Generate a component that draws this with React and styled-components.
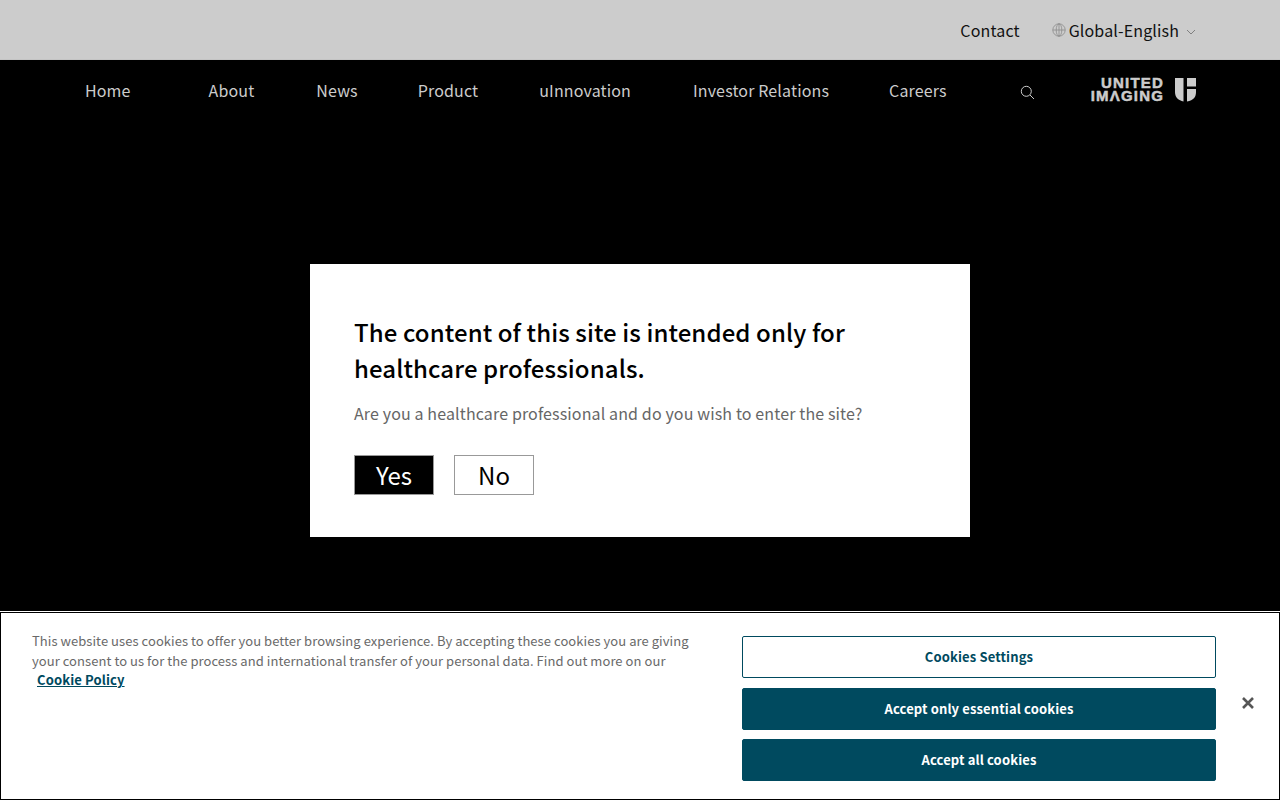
import React from "react";
import styled, { createGlobalStyle } from "styled-components";

const GlobalStyle = createGlobalStyle`
  html, body {
    margin: 0;
    padding: 0;
    background: #000;
  }
  body {
    font-family: "Noto Sans CJK SC", "Noto Sans", sans-serif;
  }
  * {
    box-sizing: border-box;
  }
`;

const Page = styled.div`
  width: 100%;
  height: 800px;
  background: #000;
  overflow: hidden;
`;

const TopBar = styled.div`
  height: 60px;
  background: #cccccc;
  border-bottom: 1px solid #c4c4c4;
  display: flex;
  align-items: center;
  justify-content: flex-end;
  padding: 0 84px 0 0;
  color: #111;
  font-size: 16px;
  letter-spacing: 0.14px;
`;

const Contact = styled.a`
  margin-right: 32px;
`;

const LangPicker = styled.div`
  display: flex;
  align-items: center;
`;

const LangLabel = styled.span`
  margin: 0 7px 0 3px;
`;

const Nav = styled.nav`
  height: 60px;
  display: flex;
  align-items: center;
  padding-left: 85px;
  color: #cccccc;
  font-size: 16px;
  letter-spacing: 0.14px;
`;

const NavItem = styled.a`
  margin-right: ${(p) => p.$gap || 61}px;
  white-space: nowrap;
`;

const SearchButton = styled.span`
  display: flex;
  margin: 4px 56px 0 0;
`;

const Logo = styled.div`
  display: flex;
  align-items: flex-start;
  gap: 12px;
  color: #cccccc;
  margin-top: -2px;
`;

const LogoText = styled.div`
  font-family: "Liberation Sans", sans-serif;
  font-weight: 700;
  font-size: 15px;
  line-height: 13px;
  text-align: right;
  -webkit-text-stroke: 0.5px #cccccc;
  letter-spacing: 1.2px;
  margin-right: -1px;
`;

const ShieldWrap = styled.span`
  display: flex;
  margin-top: 2px;
`;

const Overlay = styled.div`
  position: fixed;
  inset: 0;
  display: flex;
  align-items: center;
  justify-content: center;
`;

const Modal = styled.div`
  width: 660px;
  height: 273px;
  background: #fff;
  padding: 50px 44px 0;
`;

const Title = styled.h2`
  margin: 0;
  font-size: 24px;
  line-height: 36px;
  font-weight: 500;
  letter-spacing: 0.1px;
  color: #000;
`;

const Question = styled.p`
  margin: 14px 0 0;
  font-size: 16px;
  line-height: 26px;
  letter-spacing: 0.13px;
  color: #666;
`;

const ButtonRow = styled.div`
  display: flex;
  gap: 20px;
  margin-top: 29px;
`;

const ChoiceButton = styled.button`
  width: 80px;
  height: 40px;
  padding: 0;
  border: 1px solid #999;
  background: ${(p) => (p.$primary ? "#000" : "#fff")};
  color: ${(p) => (p.$primary ? "#fff" : "#000")};
  font-family: inherit;
  font-size: 24px;
  line-height: 36px;
`;

const CookieBanner = styled.div`
  position: fixed;
  left: 0;
  right: 0;
  bottom: 0;
  height: 188px;
  background: #fff;
  border: 1px solid #000;
  outline: 1px solid #fff;
  display: flex;
  padding: 18px 0 0 31px;
`;

const CookieText = styled.div`
  width: 680px;
  font-size: 13px;
  line-height: 19.5px;
  letter-spacing: 0.06px;
  color: #696969;
`;

const CookieLink = styled.a`
  display: block;
  margin-left: 5px;
  color: #004a5f;
  font-weight: 700;
  letter-spacing: 0.12px;
  text-decoration: underline;
`;

const CookieActions = styled.div`
  display: flex;
  flex-direction: column;
  gap: 9.5px;
  width: 474px;
  margin: 5px 0 0 30px;
`;

const CookieButton = styled.button`
  height: 42px;
  padding: 0 0 1px;
  border: 1px solid #004a5f;
  border-radius: 2px;
  background: ${(p) => (p.$filled ? "#004a5f" : "#fff")};
  color: ${(p) => (p.$filled ? "#fff" : "#004a5f")};
  font-family: inherit;
  font-size: 13px;
  font-weight: 700;
  letter-spacing: 0.13px;
`;

const CloseButton = styled.span`
  position: absolute;
  top: 84px;
  right: 25px;
  display: flex;
`;

const Chevron = styled.svg`
  margin-top: 4px;
`;

const GlobeIcon = () => (
  <svg width="14" height="14" viewBox="0 0 14 14" fill="none" stroke="#8a8a8a" strokeWidth="0.8">
    <circle cx="7" cy="7" r="6.2" />
    <ellipse cx="7" cy="7" rx="2.8" ry="6.2" />
    <path d="M.8 7h12.400M7 .8v12.400" />
  </svg>
);

const ChevronIcon = () => (
  <Chevron width="10" height="8" viewBox="0 0 10 8" fill="none" stroke="#777" strokeWidth="0.9">
    <path d="M1 2l4 4 4-4" />
  </Chevron>
);

const SearchIcon = () => (
  <svg width="15" height="15" viewBox="0 0 15 15" fill="none" stroke="#cccccc" strokeWidth="1">
    <circle cx="6.300" cy="6.300" r="5" />
    <path d="M10 10l4 4" />
  </svg>
);

const ShieldMark = () => (
  <svg width="21" height="24" viewBox="0 0 21 24" fill="#cccccc">
    <path d="M0 0h8.500v23.500C3.500 22.500 0 19.500 0 14z" />
    <path d="M12 0h9v8.500h-9z" />
    <path d="M12 11h9v3c0 5-2.500 8.500-9 9.500z" />
  </svg>
);

const CloseIcon = () => (
  <svg width="12" height="12" viewBox="0 0 12 12" fill="none" stroke="#565656" strokeWidth="2.6">
    <path d="M1 1l10 10M11 1L1 11" />
  </svg>
);

export default function App() {
  return (
    <Page>
      <GlobalStyle />
      <TopBar>
        <Contact>Contact</Contact>
        <LangPicker>
          <GlobeIcon />
          <LangLabel>Global-English</LangLabel>
          <ChevronIcon />
        </LangPicker>
      </TopBar>
      <Nav>
        <NavItem $gap={78}>Home</NavItem>
        <NavItem $gap={62}>About</NavItem>
        <NavItem $gap={60}>News</NavItem>
        <NavItem>Product</NavItem>
        <NavItem $gap={62}>uInnovation</NavItem>
        <NavItem $gap={60}>Investor Relations</NavItem>
        <NavItem $gap={73}>Careers</NavItem>
        <SearchButton>
          <SearchIcon />
        </SearchButton>
        <Logo>
          <LogoText>
            UNITED
            <br />
            IMΛGING
          </LogoText>
          <ShieldWrap>
            <ShieldMark />
          </ShieldWrap>
        </Logo>
      </Nav>

      <Overlay>
        <Modal>
          <Title>
            The content of this site is intended only for
            <br />
            healthcare professionals.
          </Title>
          <Question>Are you a healthcare professional and do you wish to enter the site?</Question>
          <ButtonRow>
            <ChoiceButton $primary>Yes</ChoiceButton>
            <ChoiceButton>No</ChoiceButton>
          </ButtonRow>
        </Modal>
      </Overlay>

      <CookieBanner>
        <CookieText>
          This website uses cookies to offer you better browsing experience. By accepting these cookies you are giving
          your consent to us for the process and international transfer of your personal data. Find out more on our
          <CookieLink>Cookie Policy</CookieLink>
        </CookieText>
        <CookieActions>
          <CookieButton>Cookies Settings</CookieButton>
          <CookieButton $filled>Accept only essential cookies</CookieButton>
          <CookieButton $filled>Accept all cookies</CookieButton>
        </CookieActions>
        <CloseButton>
          <CloseIcon />
        </CloseButton>
      </CookieBanner>
    </Page>
  );
}
